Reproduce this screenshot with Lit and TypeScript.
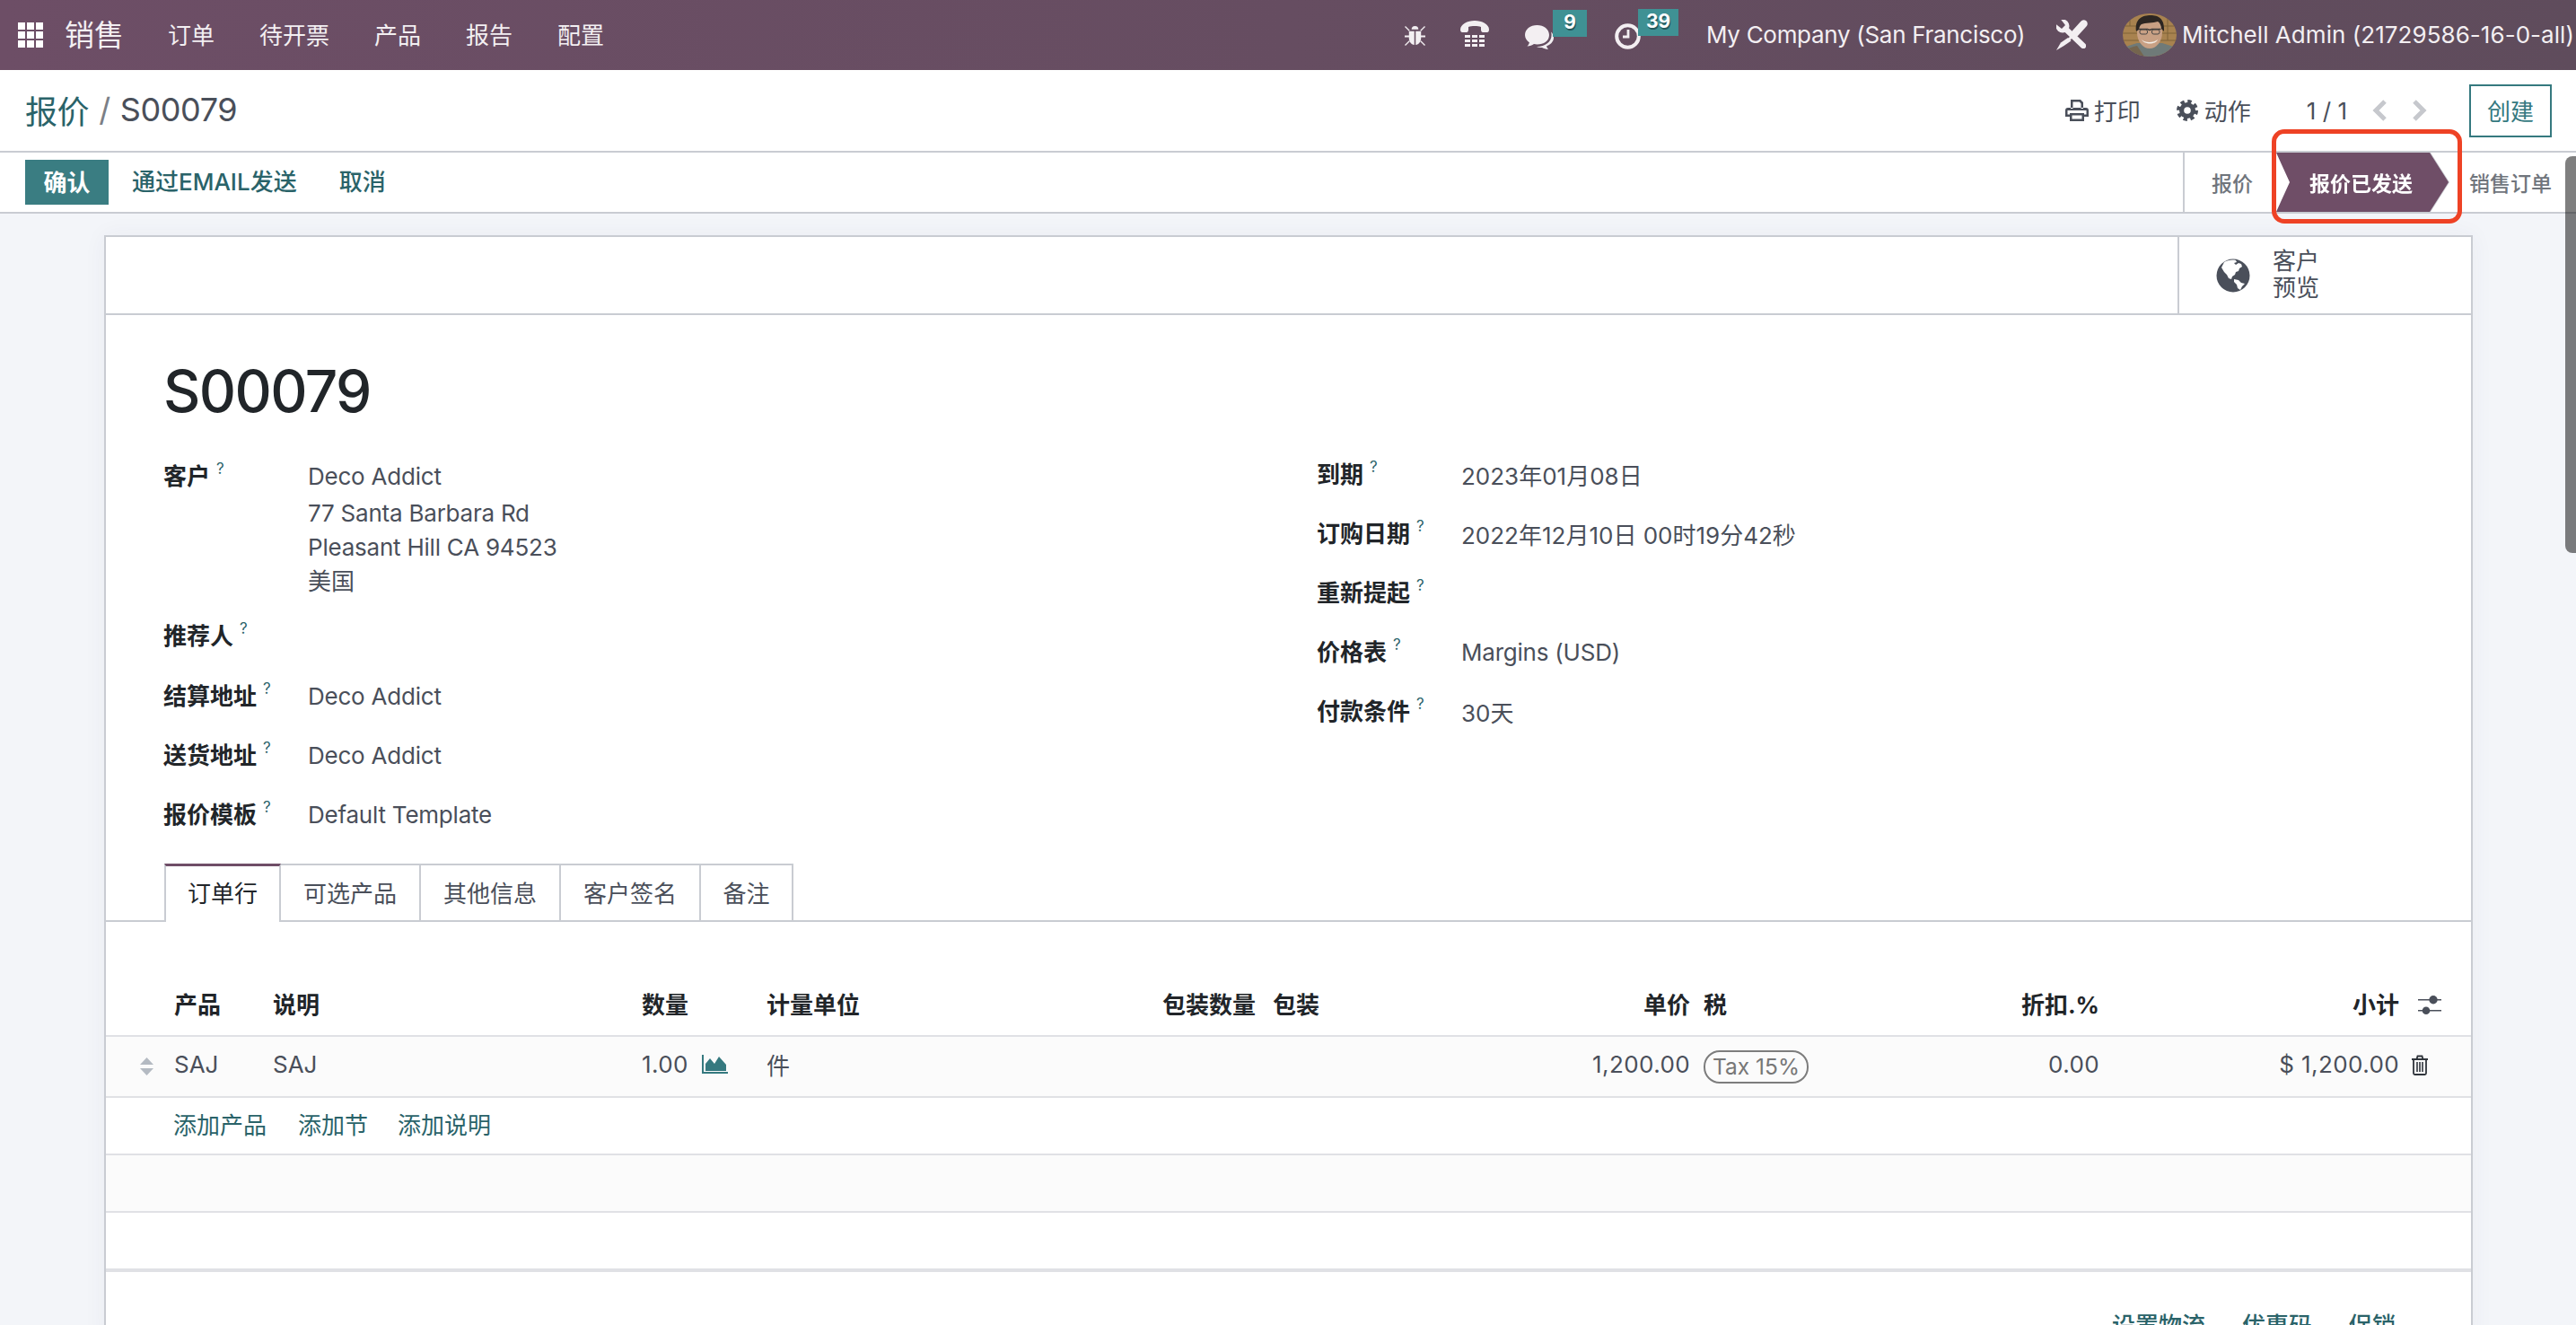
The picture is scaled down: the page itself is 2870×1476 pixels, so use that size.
import { LitElement, html, css, svg } from 'lit';
import { customElement } from 'lit/decorators.js';

const menu = ['订单', '待开票', '产品', '报告', '配置'];
const leftFields = [
  { label: '推荐人', value: '', cls: 'tall' },
  { label: '结算地址', value: 'Deco Addict' },
  { label: '送货地址', value: 'Deco Addict' },
  { label: '报价模板', value: 'Default Template' },
];
const rightFields = [
  { label: '到期', value: '2023年01月08日' },
  { label: '订购日期', value: '2022年12月10日 00时19分42秒' },
  { label: '重新提起', value: '' },
  { label: '价格表', value: 'Margins (USD)' },
  { label: '付款条件', value: '30天' },
];
const tabs = ['订单行', '可选产品', '其他信息', '客户签名', '备注'];

const icons = {
  bug: svg`<svg class="i-bug" viewBox="0 0 24 26" fill="currentColor"><path d="M8 6a4 4 0 0 1 8 0z"/><path d="M5 8h6.200v16C7.500 23.500 5 20 5 16zM12.800 8H19v8c0 4-2.500 7.500-6.200 8z"/><path d="M1 3l5 5-1 1-5-5zM23 3l-5 5 1 1 5-5zM0 14h6v2H0zM18 14h6v2h-6zM0 25l5-5 1 1-5 5zM24 25l-5-5-1 1 5 5z" transform="translate(0 -1)"/></svg>`,
  phone: svg`<svg class="i-phone" viewBox="0 0 32 30" fill="currentColor"><path d="M0 10C0 4 8 0 16 0s16 4 16 10c0 2-1 3-2 3h-5c-1 0-2-1-2-3V7c-2-1-4-1-7-1s-5 0-7 1v3c0 2-1 3-2 3H2c-1 0-2-1-2-3z"/><path d="M5 16h6v3H5zM13 16h6v3h-6zM21 16h6v3h-6zM5 21h6v3H5zM13 21h6v3h-6zM21 21h6v3h-6zM5 26h6v3H5zM13 26h6v3h-6zM21 26h6v3h-6z"/></svg>`,
  chat: svg`<svg class="i-chat" viewBox="0 0 36 28" fill="currentColor"><path d="M27 12c0-6.500-6-11-13.500-11S0 5.500 0 12c0 3.500 2 6.500 5 8.500-.5 1.500-1.500 3-2.500 4 3 0 5.500-1 7.500-2.500 1 .3 2.500.5 3.500.5C21 22.500 27 18.500 27 12z"/><path d="M29 8.500c.4 1 .6 2.300.6 3.500 0 7.500-7 13-16 13h-.8c2 1 4.200 1.200 6.200 1 2 1 4 1.800 7 2-.8-1-1.500-2-2-3.500C28 23 32 19.500 32 15c0-2.600-1.200-5-3-6.500z"/></svg>`,
  clock: svg`<svg class="i-clock" viewBox="0 0 29 29" fill="none" stroke="currentColor"><circle cx="14.500" cy="14.500" r="12.300" stroke-width="4"/><path d="M15 7v8H9" stroke-width="2.800"/></svg>`,
  tools: svg`<svg class="i-tools" viewBox="0 0 35 34">
    <defs><mask id="jaw"><rect x="-2" y="-2" width="40" height="40" fill="#fff"/><path d="M3 -3L-3 3 6 10 10 6z" fill="#000"/></mask></defs>
    <g fill="currentColor" stroke="currentColor">
      <g mask="url(#jaw)"><circle cx="7" cy="7" r="7.500" stroke="none"/><path d="M8 8l22 21" stroke-width="6.500" stroke-linecap="round"/></g>
      <path d="M30.500 4.500L21 15" stroke-width="8.500" stroke-linecap="round"/>
      <path d="M21 15L12 24" stroke-width="3"/>
      <path d="M13 20l3.500 3.500L8.500 29 0 34l5-8.500z" stroke="none"/>
    </g></svg>`,
  avatar: svg`<svg class="avatar" viewBox="0 0 60 48"><defs><clipPath id="av"><ellipse cx="30" cy="24" rx="30" ry="24"/></clipPath></defs><g clip-path="url(#av)"><rect width="60" height="48" fill="#a8824f"/><path d="M0 14h60M0 22h60M0 30h60M8 0v14M50 0v30" stroke="#7f6238" stroke-width="1"/><path d="M0 48V38l16-5h28l16 5v10z" fill="#6f7a78"/><path d="M16 36c-6 1-10 3-14 6v6h22z" fill="#75654e"/><ellipse cx="30" cy="21" rx="14" ry="18" fill="#c8a084"/><path d="M15 20C13 6 22 2 31 2s16 4 15 18l-3-3c0-4-2-7-4-8-5 2-14 1-18 3-2 1-3 5-3 6z" fill="#2c2622"/><path d="M17.500 17.500h10l2.500 1 2.500-1h10" fill="none" stroke="#3c3a38" stroke-width="1.500"/><rect x="19" y="18" width="8.500" height="5" rx="2" fill="none" stroke="#4a4745" stroke-width="1"/><rect x="32.500" y="18" width="8.500" height="5" rx="2" fill="none" stroke="#4a4745" stroke-width="1"/><path d="M21 29c3 4 14 4 18 0-2 6-15 6-18 0z" fill="#f4efe9"/></g></svg>`,
  print: svg`<svg class="i-print" viewBox="0 0 26 24" fill="currentColor"><path d="M6 0h11l3 3v7h-2.500V4.500L15.800 2.500H8.500V10H6zM3 9h20a3 3 0 0 1 3 3v7h-5v5H5v-5H0v-7a3 3 0 0 1 3-3zm4.500 8.500v4h11v-4zM2.500 12v4.500H5V15h16v1.500h2.500V12z" fill-rule="evenodd"/></svg>`,
  gear: svg`<svg class="i-gear" viewBox="0 0 24 24"><circle cx="12" cy="12" r="9" fill="currentColor"/><circle cx="12" cy="12" r="10" fill="none" stroke="currentColor" stroke-width="4" stroke-dasharray="4.300 3.550"/><circle cx="12" cy="12" r="3.800" fill="#fff"/></svg>`,
  prev: svg`<svg class="i-chev" viewBox="0 0 17 24" fill="none" stroke="#c6c8cd" stroke-width="5"><path d="M14 2L4 12l10 10"/></svg>`,
  next: svg`<svg class="i-chev" viewBox="0 0 17 24" fill="none" stroke="#c6c8cd" stroke-width="5"><path d="M3 2l10 10L3 22"/></svg>`,
  globe: svg`<svg class="i-globe" viewBox="0 0 38 38"><circle cx="19" cy="19" r="18.500" fill="#4a4f5a"/><path d="M9 4c3-2 9-3 13-2l1 2-3 1 2 2 3-2 3 1 1 3-3 2-1 3-3 1-1 3-3 2-1 3-3-1-2-4-3-3-3-5z" fill="#fff"/><path d="M20 23l5 1 3 3 4 1-3 3-2 4-3-2-1-4-3-3z" fill="#fff"/></svg>`,
  chart: svg`<svg class="i-chart" viewBox="0 0 29 21"><path d="M0 0h2v19h27v2H0z" fill="#35797f"/><path d="M4 18V10l5-6 5 6 5-8 8 9v7z" fill="#35797f"/></svg>`,
  sort: svg`<svg class="i-sort" viewBox="0 0 15 20" fill="#b4bac2"><path d="M7.500 0L15 8H0zM0 12h15L7.500 20z"/></svg>`,
  sliders: svg`<svg class="i-sliders" viewBox="0 0 26 21" fill="#4a4f5a"><path d="M0 4h26v1.500H0zM0 16h26v1.500H0z"/><circle cx="17" cy="4.700" r="4.700"/><circle cx="9" cy="16.700" r="4.300"/></svg>`,
  trash: svg`<svg class="i-trash" viewBox="0 0 20 23" fill="none" stroke="#2f343b" stroke-width="1.800"><path d="M1 5h18M3 5v15.500c0 1 .5 1.500 1.500 1.500h11c1 0 1.500-.5 1.500-1.500V5M6.500 5l1-3.500h5l1 3.500"/><path d="M7 8v11M10 8v11M13 8v11" stroke-width="1.600"/></svg>`,
};

@customElement('app-root')
export class AppRoot extends LitElement {
  static styles = css`
    :host {
      display: block;
      font-family: Inter, 'Noto Sans CJK SC', sans-serif;
      font-size: 26px;
      color: #4a4f5a;
    }
    .page {
      position: relative;
      height: 1476px;
      overflow: hidden;
      background: #f3f5f9;
    }
    svg { display: block; flex: none; }
    .latin { letter-spacing: -0.22px; }
    .num { letter-spacing: 0.4px; }

    /* top navbar */
    .navbar {
      height: 78px;
      display: flex;
      align-items: center;
      color: #f3eff2;
      background: linear-gradient(90deg, #6d4e66, #5f4c5c);
      padding: 0 2px 0 20px;
    }
    .apps {
      display: grid;
      grid-template-columns: repeat(3, 8px);
      grid-auto-rows: 8px;
      gap: 2px;
      margin-right: 24px;
      margin-top: -1px;
    }
    .apps i { background: #fff; }
    .brand { font-size: 33px; width: 66px; margin-right: 49px; padding-bottom: 4px; }
    .menu { display: flex; gap: 50px; padding-bottom: 3px; }
    .right { margin-left: auto; display: flex; align-items: center; }
    .sys { position: relative; display: block; }
    .badge {
      position: absolute;
      top: -13px;
      height: 30px;
      line-height: 28px;
      text-align: center;
      background: #3f9194;
      color: #fff;
      font-size: 21px;
      font-weight: 700;
      text-shadow: 1px 2px 0 #24585c;
    }
    .i-bug { width: 23px; height: 25px; margin-right: 39px; }
    .i-phone { width: 32px; height: 30px; margin-right: 40px; margin-top: -2px; }
    .i-chat { width: 36px; height: 28px; margin-top: 3px; }
    .i-clock { width: 29px; height: 29px; margin-top: 3px; }
    .company { margin-left: 73px; margin-right: 35px; white-space: nowrap; letter-spacing: -0.3px; padding-bottom: 2px; }
    .i-tools { width: 35px; height: 34px; margin-right: 39px; margin-top: -1px; }
    .avatar { width: 60px; height: 48px; margin-right: 6px; margin-top: 0; }
    .user { white-space: nowrap; letter-spacing: 0.05px; padding-bottom: 2px; }

    /* control panel */
    .control {
      height: 90px;
      box-sizing: content-box;
      border-bottom: 2px solid #c9ccd2;
      background: #fff;
      display: flex;
      align-items: center;
      padding: 0 27px 0 28px;
    }
    .crumbs { font-size: 36px; display: flex; align-items: center; letter-spacing: -0.4px; padding-bottom: 2px; }
    .crumbs a { color: #2a6369; }
    .crumbs span { color: #7b7f86; margin: 0 11px; }
    .tools { margin-left: auto; display: flex; align-items: center; }
    .i-print { width: 26px; height: 24px; margin-right: 6px; margin-left: 4px; }
    .i-gear { width: 24px; height: 24px; margin-right: 7px; }
    .act { display: flex; align-items: center; padding-bottom: 1px; }
    .act svg { margin-top: 1px; }
    .act.first { margin-right: 40px; }
    .pager { margin-left: 62px; margin-right: 28px; }
    .i-chev { width: 17px; height: 24px; margin-right: 27px; }
    .create {
      margin-left: 20px;
      width: 92px;
      height: 59px;
      box-sizing: border-box;
      border: 2px solid #35797f;
      color: #35797f;
      display: flex;
      align-items: center;
      justify-content: center;
      padding-bottom: 2px;
    }

    /* action and status bar */
    .statusbar {
      height: 66px;
      border-bottom: 2px solid #c9ccd2;
      background: #fff;
      display: flex;
      align-items: center;
      padding-left: 28px;
      font-weight: 500;
      color: #2a6369;
    }
    .btn-primary {
      width: 93px;
      height: 50px;
      background: #3a7d82;
      color: #fff;
      font-weight: 700;
      display: flex;
      align-items: center;
      justify-content: center;
      margin-right: 26px;
      padding-bottom: 4px;
      box-sizing: border-box;
    }
    .btn-link { margin-right: 47px; padding-bottom: 5px; }
    .stages {
      margin-left: auto;
      height: 66px;
      border-left: 2px solid #c9ccd2;
      display: flex;
      align-items: center;
      padding-left: 30px;
      padding-right: 27px;
      font-size: 23px;
      color: #70757c;
    }
    .stage-on-wrap {
      margin: 0 23px 0 26px;
      filter: drop-shadow(1.5px 0 0 #c8cad0);
    }
    .stage-on {
      width: 192px;
      height: 66px;
      padding-left: 37px;
      box-sizing: border-box;
      display: flex;
      align-items: center;
      color: #fff;
      font-weight: 700;
      background: #6f4e67;
      clip-path: polygon(0 0, 171px 0, 192px 50%, 171px 100%, 0 100%, 15px 50%);
    }

    /* overlays */
    .highlight {
      position: absolute;
      left: 2531px;
      top: 144px;
      width: 212px;
      height: 105px;
      box-sizing: border-box;
      border: 5px solid #ee4225;
      border-radius: 14px;
    }
    .scrollbar {
      position: absolute;
      right: 0;
      top: 174px;
      width: 12px;
      height: 442px;
      border-radius: 8px 0 0 8px;
      background: rgba(0, 0, 0, 0.5);
    }

    /* form sheet */
    .content { padding: 24px 115px 0 116px; }
    .sheet {
      background: #fff;
      border: 2px solid #c9ccd2;
      border-bottom: 0;
      box-shadow: 0 0 24px rgba(60, 60, 90, 0.05);
    }
    .buttonbox {
      height: 85px;
      border-bottom: 2px solid #c9ccd2;
      display: flex;
      justify-content: flex-end;
    }
    .stat {
      width: 327px;
      box-sizing: border-box;
      border-left: 2px solid #c9ccd2;
      display: flex;
      align-items: center;
      padding-left: 41px;
      gap: 25px;
    }
    .i-globe { width: 38px; height: 38px; }
    .stat-text { line-height: 30px; padding-bottom: 1px; }
    .body { padding-left: 64px; }
    .title {
      padding-top: 42px;
      margin-bottom: 19px;
      font-size: 64px;
      line-height: 86px;
      font-weight: 500;
      letter-spacing: -1.600px;
      color: #212529;
    }
    .fields { display: grid; grid-template-columns: 1285px 1fr; }
    .field { display: flex; height: 66px; align-items: center; }
    .field.tall { height: 68px; }
    .field.addr { height: 176px; align-items: flex-start; padding-top: 14px; box-sizing: border-box; line-height: 38px; }
    .addr-first { margin-bottom: 3px; }
    .label { width: 161px; font-weight: 700; color: #212529; flex: none; white-space: nowrap; padding-bottom: 4px; }
    .label sup {
      color: #2a6369;
      font-size: 17px;
      font-weight: 400;
      line-height: 0;
      vertical-align: 12px;
      margin-left: 7px;
    }
    .right-col { margin-top: -3px; }
    .right-col .label { width: 161px; }

    .tabs {
      margin-top: 22px;
      height: 63px;
      border-bottom: 2px solid #c9ccd2;
      display: flex;
      padding-left: 65px;
    }
    .tab {
      height: 65px;
      width: 156px;
      box-sizing: border-box;
      border: 2px solid #c9ccd2;
      border-left: 0;
      border-bottom: 0;
      display: flex;
      align-items: center;
      justify-content: center;
      white-space: nowrap;
      padding-bottom: 5px;
    }
    .tab:last-child { width: 103px; }
    .tab.on {
      width: 130px;
      background: #fff;
      border-top: 3px solid #6f4e67;
      border-left: 2px solid #c9ccd2;
      border-right: 2px solid #c9ccd2;
      color: #212529;
    }

    .table { margin-top: 60px; }
    .row {
      display: grid;
      grid-template-columns: 76px 110px 411px 139px 441px 123px 283px 182px 218px 238px 334px 1fr;
      align-items: center;
      border-bottom: 2px solid #e0e1e5;
      white-space: nowrap;
    }
    .row > span { padding-bottom: 5px; }
    .row.head { height: 66px; font-weight: 700; color: #212529; }
    .row.line { height: 66px; background: #fbfbfb; }
    .r { text-align: right; }
    .tax { padding-left: 15px; }
    .i-sort { width: 15px; height: 20px; margin-left: 38px; }
    .qty { display: flex; align-items: center; }
    .i-chart { width: 29px; height: 21px; margin-left: 15px; }
    .pill {
      display: inline-block;
      width: 117px;
      height: 37px;
      box-sizing: border-box;
      margin-left: 15px;
      margin-top: 5px;
      border: 2px solid #7d7d7d;
      border-radius: 18px;
      font-size: 24.500px;
      line-height: 33px;
      text-align: center;
      color: #777;
    }
    .i-sliders { width: 26px; height: 21px; margin-left: 21px; margin-top: -2px; }
    .i-trash { width: 20px; height: 23px; margin-left: 13px; margin-top: -4px; }
    .row2 {
      height: 62px;
      border-bottom: 2px solid #e0e1e5;
      display: flex;
      align-items: center;
      padding-left: 75px;
      gap: 35px;
      color: #2a6369;
    }
    .row2 span { padding-bottom: 6px; }
    .row2.shade { background: #fbfbfb; }
    .row2.last { border-bottom-width: 4px; }
    .row2 .gap-sm { margin-left: -2px; }
    .footer {
      display: flex;
      justify-content: flex-end;
      gap: 41px;
      padding: 41px 84px 0 0;
      line-height: 38px;
      font-weight: 500;
      color: #2a6369;
    }
  `;

  field(f: { label: string; value: string; cls?: string }) {
    return html`<div class="field ${f.cls ?? ''}">
      <div class="label">${f.label}<sup>?</sup></div>
      <div class=${/[\u4e00-\u9fa5]/.test(f.value) ? '' : 'latin'}>${f.value}</div>
    </div>`;
  }

  render() {
    return html`
      <div class="page">
        <header class="navbar">
          <div class="apps">${[...Array(9)].map(() => html`<i></i>`)}</div>
          <div class="brand">销售</div>
          <nav class="menu">${menu.map((m) => html`<span>${m}</span>`)}</nav>
          <div class="right">
            ${icons.bug} ${icons.phone}
            <span class="sys" style="margin-right:64px">${icons.chat}<span class="badge" style="left:31px;width:38px">9</span></span>
            <span class="sys">${icons.clock}<span class="badge" style="left:26px;width:45px">39</span></span>
            <span class="company">My Company (San Francisco)</span>
            ${icons.tools} ${icons.avatar}
            <span class="user">Mitchell Admin (21729586-16-0-all)</span>
          </div>
        </header>

        <div class="control">
          <div class="crumbs"><a>报价</a><span>/</span>S00079</div>
          <div class="tools">
            <div class="act first">${icons.print}打印</div>
            <div class="act">${icons.gear}动作</div>
            <div class="pager">1 / 1</div>
            ${icons.prev} ${icons.next}
            <div class="create">创建</div>
          </div>
        </div>

        <div class="statusbar">
          <div class="btn-primary">确认</div>
          <div class="btn-link">通过EMAIL发送</div>
          <div class="btn-link">取消</div>
          <div class="stages">
            <span>报价</span>
            <div class="stage-on-wrap"><div class="stage-on">报价已发送</div></div>
            <span>销售订单</span>
          </div>
        </div>

        <main class="content">
          <section class="sheet">
            <div class="buttonbox">
              <div class="stat">${icons.globe}<div class="stat-text">客户<br />预览</div></div>
            </div>
            <div class="body">
              <div class="title">S00079</div>
              <div class="fields">
                <div>
                  <div class="field addr">
                    <div class="label">客户<sup>?</sup></div>
                    <div>
                      <div class="addr-first latin">Deco Addict</div>
                      <div class="latin">77 Santa Barbara Rd</div>
                      <div class="latin">Pleasant Hill CA 94523</div>
                      <div>美国</div>
                    </div>
                  </div>
                  ${leftFields.map((f) => this.field(f))}
                </div>
                <div class="right-col">${rightFields.map((f) => this.field(f))}</div>
              </div>
            </div>

            <div class="tabs">
              ${tabs.map((t, i) => html`<div class="tab ${i === 0 ? 'on' : ''}">${t}</div>`)}
            </div>

            <div class="table">
              <div class="row head">
                <span></span><span>产品</span><span>说明</span><span>数量</span><span>计量单位</span>
                <span>包装数量</span><span>包装</span><span class="r">单价</span>
                <span class="tax">税</span><span class="r">折扣.%</span><span class="r">小计</span>
                ${icons.sliders}
              </div>
              <div class="row line">
                ${icons.sort}<span>SAJ</span><span>SAJ</span>
                <span class="qty num">1.00${icons.chart}</span><span>件</span><span></span><span></span>
                <span class="r num">1,200.00</span><span><span class="pill">Tax 15%</span></span>
                <span class="r num">0.00</span><span class="r num">$ 1,200.00</span>
                ${icons.trash}
              </div>
              <div class="row2"><span>添加产品</span><span>添加节</span><span class="gap-sm">添加说明</span></div>
              <div class="row2 shade"></div>
              <div class="row2 last"></div>
            </div>
            <div class="footer"><span>设置物流</span><span>优惠码</span><span>促销</span></div>
          </section>
        </main>

        <div class="highlight"></div>
        <div class="scrollbar"></div>
      </div>
    `;
  }
}
